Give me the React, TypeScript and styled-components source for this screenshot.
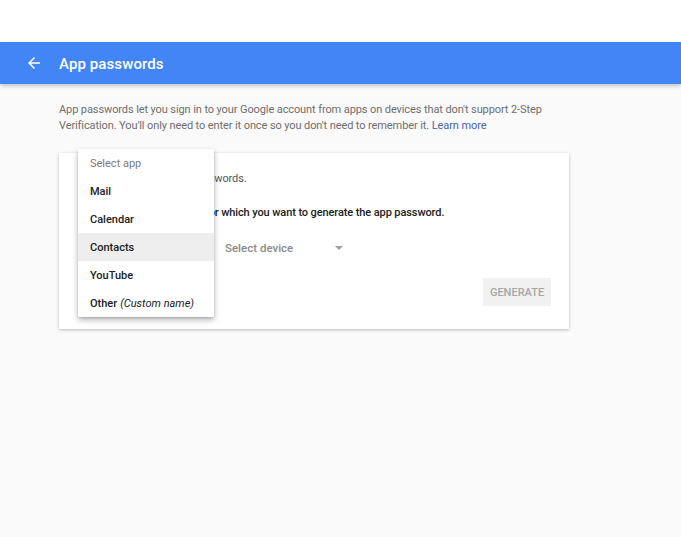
import React from "react";
import styled, { createGlobalStyle } from "styled-components";

const Global = createGlobalStyle`
  html, body { margin: 0; padding: 0; background: #fafafa; }
  body { font-family: Roboto, "Noto Sans", Arial, sans-serif; -webkit-font-smoothing: antialiased; }
`;

const Page = styled.div`
  min-height: 537px;
  background: #fafafa;
  display: flex;
  flex-direction: column;
`;

const TopStrip = styled.div`
  height: 42px;
  background: #ffffff;
`;

const Header = styled.header`
  height: 42px;
  background: #4285f4;
  box-shadow: 0 2px 4px rgba(0, 0, 0, 0.22);
  display: flex;
  align-items: center;
  padding-left: 25px;
  gap: 16px;
  position: relative;
  z-index: 1;
`;

const BackButton = styled.span`
  display: flex;
  width: 18px;
  height: 18px;
  color: #ffffff;
`;

const Title = styled.h1`
  margin: 1px 0 0;
  font-size: 15px;
  font-weight: 500;
  color: #ffffff;
  letter-spacing: 0.1px;
`;

const Content = styled.main`
  width: 510px;
  padding-left: 59px;
  display: flex;
  flex-direction: column;
`;

const Description = styled.p`
  margin: 18px 0 0;
  font-size: 11px;
  line-height: 16px;
  letter-spacing: -0.1px;
  color: #6e6e6e;
`;

const Link = styled.a`
  color: #4862ad;
  text-decoration: none;
`;

const Card = styled.section`
  position: relative;
  margin-top: 19px;
  background: #ffffff;
  box-shadow: 0 1px 3px rgba(0, 0, 0, 0.25);
  padding: 18px 18px 23px 20px;
  display: flex;
  flex-direction: column;
`;

const CardText = styled.p<{ $strong?: boolean }>`
  margin: 0;
  font-size: 11px;
  line-height: 16px;
  letter-spacing: -0.1px;
  font-weight: ${(p) => (p.$strong ? 500 : 400)};
  color: ${(p) => (p.$strong ? "#212121" : "#555555")};
`;

const Spacer = styled.div<{ $h: number }>`
  height: ${(p) => p.$h}px;
`;

const SelectRow = styled.div`
  display: flex;
  align-items: center;
  gap: 12px;
  height: 28px;
`;

const SelectField = styled.div<{ $w: number }>`
  width: ${(p) => p.$w}px;
  display: flex;
  align-items: center;
  justify-content: space-between;
  font-size: 11.5px;
  font-weight: 500;
  color: #8a8a8a;
`;

const Caret = styled.span`
  width: 0;
  height: 0;
  border-left: 4px solid transparent;
  border-right: 4px solid transparent;
  border-top: 4px solid #9e9e9e;
  margin-right: 6px;
`;

const Actions = styled.div`
  display: flex;
  justify-content: flex-end;
  margin-top: 16px;
`;

const GenerateButton = styled.button`
  width: 68px;
  height: 28px;
  border: none;
  background: #f1f1f1;
  color: #a6a6a6;
  font-family: Roboto, Arial, sans-serif;
  font-size: 11px;
  font-weight: 500;
  padding: 0;
`;

const Menu = styled.ul`
  position: absolute;
  left: 19px;
  top: -4px;
  width: 136px;
  margin: 0;
  padding: 0;
  list-style: none;
  background: #ffffff;
  box-shadow: 0 3px 6px rgba(0, 0, 0, 0.28), 0 1px 2px rgba(0, 0, 0, 0.12);
  z-index: 2;
`;

const MenuItem = styled.li<{ $placeholder?: boolean; $active?: boolean }>`
  height: 28px;
  display: flex;
  align-items: center;
  padding-left: 12px;
  font-size: 11px;
  font-weight: ${(p) => (p.$placeholder ? 400 : 500)};
  color: ${(p) => (p.$placeholder ? "#7a7a7a" : "#212121")};
  background: ${(p) => (p.$active ? "#eeeeee" : "transparent")};
  white-space: nowrap;
`;

const Hint = styled.em`
  font-weight: 400;
  margin-left: 3px;
`;

const ArrowBack = () => (
  <svg width="18" height="18" viewBox="0 0 24 24" fill="currentColor">
    <path d="M20 11H7.83l5.59-5.59L12 4l-8 8 8 8 1.41-1.41L7.83 13H20v-2z" />
  </svg>
);

export default function App() {
  return (
    <>
      <Global />
      <Page>
        <TopStrip />
        <Header>
          <BackButton>
            <ArrowBack />
          </BackButton>
          <Title>App passwords</Title>
        </Header>
        <Content>
          <Description>
            App passwords let you sign in to your Google account from apps on devices that don't support 2-Step
            Verification. You'll only need to enter it once so you don't need to remember it.{" "}
            <Link href="#">Learn more</Link>
          </Description>
          <Card>
            <CardText>You don't have any app passwords.</CardText>
            <Spacer $h={18} />
            <CardText $strong>Select the app and device for which you want to generate the app password.</CardText>
            <Spacer $h={13} />
            <SelectRow>
              <SelectField $w={134}>
                Select app
                <Caret />
              </SelectField>
              <SelectField $w={124}>
                Select device
                <Caret />
              </SelectField>
            </SelectRow>
            <Actions>
              <GenerateButton>GENERATE</GenerateButton>
            </Actions>
            <Menu>
              <MenuItem $placeholder>Select app</MenuItem>
              <MenuItem>Mail</MenuItem>
              <MenuItem>Calendar</MenuItem>
              <MenuItem $active>Contacts</MenuItem>
              <MenuItem>YouTube</MenuItem>
              <MenuItem>
                Other<Hint>(Custom name)</Hint>
              </MenuItem>
            </Menu>
          </Card>
        </Content>
      </Page>
    </>
  );
}
